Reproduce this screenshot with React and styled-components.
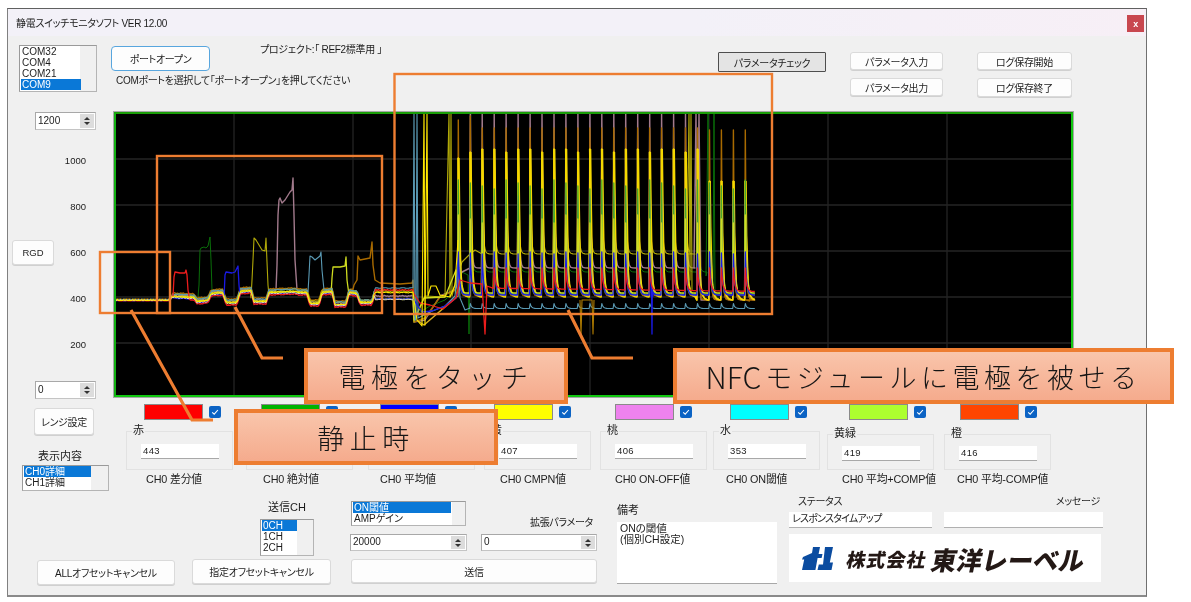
import React from 'react';
import styled, { createGlobalStyle } from 'styled-components';

const Global = createGlobalStyle`
  html, body { margin: 0; padding: 0; background: #fff; }
  * { box-sizing: border-box; }
`;

const FONT = '"Liberation Sans", "Noto Sans CJK JP", sans-serif';

const Stage = styled.div`
  position: relative;
  width: 1191px;
  height: 602px;
  overflow: hidden;
  padding: 8px 0 0 7px;
  font-family: ${FONT};
  font-size: 10px;
  letter-spacing: -0.3px;
  font-feature-settings: "palt";
  color: #1c1c1c;
  filter: blur(0.35px);
`;

const Window = styled.div`
  width: 1140px;
  height: 589px;
  background: #f0f0f0;
  border: 1px solid #808080;
  border-top-color: #606060;
  border-bottom: 2px solid #8a8a8a;
  border-right-color: #707070;
`;

const TitleBar = styled.div`
  height: 27px;
  display: flex;
  align-items: center;
  justify-content: space-between;
  padding: 0 2px 1px 8px;
  background: linear-gradient(90deg, #f3f1f8, #f3f1f8 60%, #f7eff6);
`;

const CloseButton = styled.div`
  width: 17px;
  height: 17px;
  margin-top: 3px;
  background: #c8474f;
  color: #fff;
  font-size: 9px;
  font-weight: 700;
  display: flex;
  align-items: center;
  justify-content: center;
`;

const TopRow = styled.div`
  height: 76px;
  display: flex;
  padding-left: 11px;
  padding-right: 74px;
`;

const ListBox = styled.div`
  width: ${p => p.$w}px;
  height: ${p => p.$h}px;
  background: linear-gradient(90deg, #fff ${p => p.$lane}px, #f0f0f0 ${p => p.$lane}px);
  border: 1px solid #9a9a9a;
  border-right-color: #b4b4b4;
  border-bottom-color: #b4b4b4;
  padding: 0 1px;
  margin-top: ${p => p.$mt || 0}px;
  margin-left: ${p => p.$ml || 0}px;
  flex: none;
`;

const ListItem = styled.div`
  height: 11px;
  line-height: 11px;
  width: ${p => p.$w}px;
  letter-spacing: 0;
  padding-left: 1px;
  white-space: nowrap;
  overflow: hidden;
  background: ${p => (p.$on ? '#0a78d7' : 'transparent')};
  color: ${p => (p.$on ? '#fff' : '#1c1c1c')};
`;

const PortColumn = styled.div`
  width: 149px;
  margin-left: 14px;
  margin-top: 10px;
  flex: none;
`;

const Button = styled.div`
  display: flex;
  align-items: center;
  justify-content: center;
  white-space: nowrap;
  flex: none;
  width: ${p => p.$w}px;
  height: ${p => p.$h}px;
  margin-left: ${p => p.$ml || 0}px;
  margin-top: ${p => p.$mt || 0}px;
  background: #fdfdfd;
  border: 1px solid #dadada;
  border-radius: 3px;
  box-shadow: 0 1px 0 #d0d0d0;
`;

const PortButton = styled(Button)`
  border: 1.5px solid #58a6de;
  box-shadow: none;
  border-radius: 4px;
`;

const PressedButton = styled(Button)`
  background: #e4e4e4;
  border: 1px solid #4e4e4e;
  border-radius: 1px;
  box-shadow: none;
`;

const Hint = styled.div`
  margin: 1px 0 0 5px;
  white-space: nowrap;
`;

const Project = styled.div`
  margin-top: 5px;
  white-space: nowrap;
`;

const TopButtons = styled.div`
  margin-left: auto;
  margin-top: 16px;
  display: flex;
`;

const ButtonStack = styled.div`
  display: flex;
  flex-direction: column;
  margin-left: ${p => p.$ml}px;
  gap: 8px;
`;

const ChartRow = styled.div`
  display: flex;
  height: 288px;
  margin-bottom: 5px;
  margin-top: -1px;
`;

const AxisColumn = styled.div`
  width: 105px;
  flex: none;
  display: flex;
  flex-direction: column;
  padding-top: 1px;
`;

const AxisScale = styled.div`
  margin-top: 7px;
`;

const AxisRow = styled.div`
  height: 46.2px;
  display: flex;
  align-items: center;
  justify-content: flex-end;
  padding-right: 27px;
  font-size: 9.5px;
  letter-spacing: 0;
`;

const RgdButton = styled(Button)`
  margin-right: auto;
  margin-left: 4px;
`;

const Spinner = styled.div`
  display: flex;
  flex: none;
  width: ${p => p.$w}px;
  height: ${p => p.$h || 18}px;
  margin-left: ${p => p.$ml || 0}px;
  margin-top: ${p => p.$mt || 0}px;
  background: #fff;
  border: 1px solid #a8a8a8;
  border-bottom-color: #c4c4c4;
  border-right-color: #c4c4c4;
`;

const SpinText = styled.div`
  flex: 1;
  padding-left: 2px;
  letter-spacing: 0;
  line-height: ${p => p.$lh || 15}px;
`;

const SpinArrows = styled.div`
  width: 14px;
  margin: 1px;
  background: #dcdcdc;
  display: flex;
  flex-direction: column;
  align-items: center;
  justify-content: center;
  gap: 2px;
`;

const ArrowUp = styled.i`
  width: 0;
  height: 0;
  border-left: 3px solid transparent;
  border-right: 3px solid transparent;
  border-bottom: 3px solid #333;
`;

const ArrowDown = styled.i`
  width: 0;
  height: 0;
  border-left: 3px solid transparent;
  border-right: 3px solid transparent;
  border-top: 3px solid #333;
`;

const ChartFrame = styled.div`
  width: 961px;
  height: 287px;
  flex: none;
  border: 1px solid #a8a8a8;
  background: #000;
`;

const ChartInner = styled.div`
  width: 959px;
  height: 285px;
  border: 2px solid #12b012;
  border-top-color: #1a9e08;
  border-right-color: #10c810;
  border-bottom-color: #10c810;
  overflow: hidden;
`;

const MidRow = styled.div`
  display: flex;
  height: 91px;
`;

const LeftColumn = styled.div`
  width: 118px;
  flex: none;
  padding-top: 4px;
`;

const CenterLabel = styled.div`
  width: ${p => p.$w}px;
  margin-left: ${p => p.$ml || 0}px;
  margin-top: ${p => p.$mt || 0}px;
  text-align: center;
  line-height: 12px;
  white-space: nowrap;
  font-size: 11px;
  letter-spacing: 0;
`;

const Channel = styled.div`
  width: ${p => p.$w}px;
  flex: none;
`;

const SwatchRow = styled.div`
  display: flex;
  align-items: center;
  height: 16px;
  padding-left: ${p => p.$left}px;
`;

const Swatch = styled.div`
  width: 59px;
  height: 16px;
  background: ${p => p.$color};
  border: 1px solid #8a8a8a;
`;

const Check = styled.div`
  width: 12px;
  height: 12px;
  margin-left: 6px;
  border-radius: 2px;
  background: #0b63c4;
  display: flex;
  align-items: center;
  justify-content: center;
`;

const Group = styled.div`
  position: relative;
  width: 107px;
  height: ${p => 470 - p.$top}px;
  margin-top: ${p => p.$top - 420}px;
  border: 1px solid #e2e2e2;
  padding: ${p => (p.$top > 431 ? 11 : 12)}px 0 0 14px;
`;

const Legend = styled.span`
  position: absolute;
  left: 5px;
  top: -8px;
  padding: 0 1px;
  background: #f0f0f0;
  line-height: 12px;
  font-size: 11px;
  letter-spacing: 0;
`;

const ValueBox = styled.div`
  width: 78px;
  height: 15px;
  background: #fff;
  border-bottom: 1px solid #a8a8a8;
  padding-left: 2px;
  line-height: 13px;
  font-size: 9.5px;
  letter-spacing: 0.4px;
`;

const Caption = styled.div`
  margin-top: 3px;
  padding-left: ${p => p.$left}px;
  white-space: nowrap;
  line-height: 13px;
  font-size: 10.8px;
  letter-spacing: -0.15px;
`;

const BottomRow = styled.div`
  display: flex;
  height: 95px;
`;

const OffsetArea = styled.div`
  width: 343px;
  flex: none;
  padding-top: 6px;
`;

const OffsetButtons = styled.div`
  display: flex;
  align-items: flex-start;
  margin-top: 3px;
`;

const ParamArea = styled.div`
  width: 266px;
  flex: none;
  padding-top: 6px;
`;

const ParamTop = styled.div`
  display: flex;
  align-items: flex-end;
  justify-content: space-between;
  width: 246px;
`;

const ParamLabel = styled.div`
  line-height: 12px;
  margin-bottom: -3px;
  margin-right: 4px;
  white-space: nowrap;
`;

const SpinnerRow = styled.div`
  display: flex;
  gap: 14px;
  margin-top: 8px;
  margin-left: -1px;
`;

const NoteArea = styled.div`
  width: 172px;
  flex: none;
  padding-top: 9px;
`;

const NoteLabel = styled.div`
  line-height: 12px;
  font-size: 11px;
  letter-spacing: 0;
  white-space: nowrap;
`;

const FieldLabel = styled.div`
  line-height: 12px;
  white-space: nowrap;
`;

const NoteBox = styled.div`
  width: 160px;
  height: 62px;
  margin-top: 6px;
  background: #fff;
  border-bottom: 1px solid #a8a8a8;
  padding: 1px 3px;
  line-height: 11px;
  font-size: 10.5px;
  letter-spacing: 0;
`;

const StatusArea = styled.div`
  width: 314px;
  flex: none;
`;

const StatusLabels = styled.div`
  display: flex;
  justify-content: space-between;
  height: 17px;
  padding: 1px 3px 0 9px;
`;

const StatusBoxes = styled.div`
  display: flex;
  justify-content: space-between;
`;

const StatusBox = styled.div`
  width: ${p => p.$w}px;
  height: 16px;
  background: #fff;
  border-bottom: 1px solid #b0b0b0;
  padding-left: 3px;
  line-height: 14px;
  letter-spacing: -0.8px;
  white-space: nowrap;
`;

const LogoBox = styled.div`
  width: 312px;
  height: 48px;
  margin-top: 6px;
  background: #fff;
  display: flex;
  align-items: center;
  padding-left: 13px;
`;

const LogoSmall = styled.span`
  margin-left: 14px;
  font-size: 19px;
  font-weight: 900;
  letter-spacing: 1px;
  font-feature-settings: normal;
  color: #231815;
  transform: skewX(-12deg);
  white-space: nowrap;
`;

const LogoLarge = styled.span`
  margin-left: 5px;
  font-size: 25.5px;
  font-weight: 900;
  letter-spacing: 0;
  font-feature-settings: normal;
  color: #231815;
  transform: skewX(-12deg);
  white-space: nowrap;
`;

const Annotations = styled.svg`
  position: absolute;
  left: 0;
  top: 0;
  width: 1191px;
  height: 602px;
  pointer-events: none;
`;

const Callout = styled.div`
  position: absolute;
  left: ${p => p.$x}px;
  top: ${p => p.$y}px;
  width: ${p => p.$w}px;
  height: 56px;
  display: flex;
  align-items: center;
  justify-content: center;
  background: linear-gradient(180deg, #f9c5ab, #f5ab8d);
  border: 4px solid #ed7d31;
  font-family: "Noto Sans CJK JP", sans-serif;
  font-feature-settings: normal;
  font-weight: 300;
  font-size: 27px;
  letter-spacing: ${p => p.$ls}px;
  color: #151515;
  white-space: nowrap;
`;

const Tight = styled.span`
  letter-spacing: 0;
  font-size: 30px;
  margin-right: 4px;
`;

/* ---------- chart data ---------- */

const BASE_STEPS = [
  [116, 300], [170, 300], [172, 296], [194, 297], [197, 301], [208, 300], [211, 293], [223, 292],
  [226, 302], [237, 302], [240, 291], [251, 290], [254, 301], [266, 301], [269, 292], [295, 291],
  [298, 292], [307, 292], [310, 303], [319, 303], [322, 292], [332, 291], [335, 304], [346, 304],
  [349, 292], [357, 293], [360, 302], [372, 302], [375, 290], [415, 290],
];

const interp = (steps, x) => {
  for (let i = 1; i < steps.length; i++) {
    if (x <= steps[i][0]) {
      const [x0, y0] = steps[i - 1];
      const [x1, y1] = steps[i];
      return y0 + ((y1 - y0) * (x - x0)) / (x1 - x0 || 1);
    }
  }
  return steps[steps.length - 1][1];
};

const wobble = (x, seed) => Math.sin(x * 2.1 + seed) * 0.35 + Math.sin(x * 0.7 + seed * 3) * 0.25;

function leftPart(off, lateOff, seed, bumps = []) {
  const pts = [];
  for (let x = 116; x <= 413; x += 1.5) {
    if (bumps.some(b => x >= b[0][0] && x <= b[b.length - 1][0])) continue;
    const o = x > 172 ? off : off * 0.2;
    const late = x > 375 ? lateOff : 0;
    pts.push([x, interp(BASE_STEPS, x) + o + late + wobble(x, seed)]);
  }
  bumps.forEach(b => pts.push(...b));
  return pts.sort((a, b) => a[0] - b[0]);
}

const SPIKE_X = Array.from({ length: 25 }, (_, i) => 458.3 + 11.96 * i);
const DECAY = [0.6, 1.2, 1.8, 2.6, 3.6, 5, 7, 9.5];

function spikes(base, peak, { from = 0, to = 24, tau = 1.25 } = {}) {
  const pts = [];
  for (let i = from; i <= to; i++) {
    const xs = SPIKE_X[i];
    const b = base(i);
    const p = peak(i);
    pts.push([xs - 0.7, b], [xs, p]);
    DECAY.forEach(t => pts.push([xs + t, b + (p - b) * Math.exp(-t / tau)]));
  }
  return pts;
}

const toPoints = pts => pts.map(p => `${p[0].toFixed(1)},${p[1].toFixed(1)}`).join(' ');

const yellowPeak = i => (i === 0 ? 158 : i >= 21 ? 181 : i % 3 === 1 ? 152 : 149);

const YELLOW_COLUMNS = SPIKE_X.map((xs, i) => {
  const p = yellowPeak(i);
  return `M${(xs + 0.2).toFixed(1)} ${p} L${(xs + 0.9).toFixed(1)} ${p + 55} L${(xs + 2.2).toFixed(1)} 280`;
}).join(' ');

const RED_BUMP = [[173, 296], [174, 277], [175, 272], [180, 273], [185, 273], [186, 270], [187, 275], [188, 290]];
const GREEN_BUMP = [[198, 297], [199, 285], [200, 250], [201, 248], [204, 247], [206, 248], [208, 246], [210, 237], [211, 260], [212, 290]];
const BLUE_BUMP = [[224, 298], [225, 275], [226, 272], [232, 273], [235, 272], [238, 266], [239, 285], [240, 296]];
const YELLOW_BUMP = [[251, 298], [252, 280], [253, 260], [254, 238], [256, 240], [262, 250], [265, 251], [266, 238], [267, 262], [268, 285], [269, 296]];
const PINK_BUMP = [[276, 290], [277, 265], [278, 215], [279, 200], [280, 198], [282, 203], [285, 200], [290, 192], [292, 190], [293, 178], [294, 215], [295, 260], [297, 290]];
const SKY_BUMP = [[308, 292], [309, 275], [310, 256], [312, 257], [315, 260], [320, 256], [321, 252], [322, 270], [324, 290]];
const LIME_BUMP = [[331, 295], [332, 278], [333, 267], [340, 267], [345, 266], [346, 257], [347, 280], [349, 295]];
const ORANGE_BUMP = [[354, 285], [357, 280], [358, 256], [360, 260], [370, 258], [372, 242], [373, 265], [375, 280], [380, 283], [400, 284], [412, 283]];

const LOWER_TRACES = [
  {
    color: '#0a6e0a', width: 1,
    pts: [
      ...leftPart(1, 1, 1, [GREEN_BUMP]),
      [414, 320], [420, 312], [430, 306], [445, 300], [455, 290], [462, 272], [468, 275],
      [469, 334], [470, 270],
      ...spikes(() => 272, i => (i % 2 ? 196 : 190), { from: 1, to: 20, tau: 1.1 }),
      [706, 276], [708, 112], [709, 280], [713, 285], [714, 112], [715, 295], [720, 300],
    ],
  },
  {
    color: '#a27a8c', width: 1.4,
    pts: [
      ...leftPart(-1, 7, 2, [PINK_BUMP]),
      [414, 322], [425, 320], [440, 296], [455, 290], [462, 272], [470, 268],
      ...spikes(() => 268, () => 112, { from: 1, to: 19, tau: 0.9 }),
      [694, 268], [696, 112], [697, 268], [699, 112], [701, 300],
      ...spikes(() => 300, () => 207, { from: 21, to: 24, tau: 1.2 }),
    ],
  },
  {
    color: '#a86a00', width: 1.4,
    pts: [
      ...leftPart(-3, -7, 3, [ORANGE_BUMP]),
      [414, 322], [425, 318], [440, 297], [455, 290],
      ...spikes(
        i => (i < 20 ? 296 : 300),
        i => (i === 0 ? 120 : i >= 21 ? 130 : i === 1 ? 116 : 128),
        { tau: 0.9 },
      ),
      [746, 300], [750, 301],
    ],
  },
  {
    color: '#b0a808', width: 1.1,
    pts: [
      ...leftPart(-2, 3, 4, [YELLOW_BUMP]),
      [414, 322], [425, 296], [445, 297], [449, 112], [450, 297], [451, 112], [452, 296], [456, 280], [462, 262], [470, 254], [475, 250], [482, 254],
      ...spikes(() => 254, () => 190, { from: 2, to: 19, tau: 1.1 }),
      [687, 254], [689, 112], [690, 280], [691, 112], [692, 290],
    ],
  },
  {
    color: '#d8ac20', width: 1.5,
    pts: [
      [418, 321], [424, 325],
      ...spikes(i => (i < 20 ? 296 : 300), () => 230, { tau: 1.9 }),
    ],
  },
  {
    color: '#f5d800', width: 1.5,
    pts: spikes(i => (i < 20 ? 297 : 300), yellowPeak, { tau: 1.5 }),
  },
];

const UPPER_TRACES = [
  {
    color: '#c09ab0', width: 1.2,
    pts: spikes(() => 295, i => (i === 0 ? 205 : i % 2 ? 196 : 200), { tau: 1.2 }),
  },
  {
    color: '#48a828', width: 1.3,
    pts: spikes(() => 294, i => 180 + (i % 4) * 3, { tau: 0.8 }),
  },
  {
    color: '#d0dc20', width: 1.3,
    pts: [
      ...leftPart(0, 9, 5, [LIME_BUMP]),
      [414, 320], [424, 298], [445, 297], [456, 270],
      ...spikes(() => 293, i => 215 + (i % 3) * 4, { tau: 1.2 }),
    ],
  },
  {
    color: '#5a9ab4', width: 1.1,
    pts: [
      ...leftPart(-2, 0, 6, [SKY_BUMP]),
      [414, 112], [415, 320], [416, 320], [417, 112], [418, 318], [430, 312], [445, 306], [455, 296], [458, 260], [460, 298], [465, 310],
      [470, 308],
      ...spikes(() => 308.5, () => 303.5, { from: 1, tau: 1.4 }),
    ],
  },
  {
    color: '#1a1ae6', width: 1.3,
    pts: [
      ...leftPart(2, 7, 7, [BLUE_BUMP]),
      [414, 300], [422, 312], [432, 311], [445, 306], [452, 301], [456, 298],
      ...spikes(() => 295, i => 252 + (i % 3), { tau: 1.3 }),
      [651, 296], [652, 334], [653, 296],
    ].sort((a, b) => a[0] - b[0]),
  },
  {
    color: '#ec1c1c', width: 1.3,
    pts: [
      ...leftPart(3, -3, 8, [RED_BUMP]),
      [414, 294], [420, 303], [430, 305], [443, 309], [450, 303], [456, 298], [460, 280], [470, 283], [482, 284], [485, 334], [487, 286],
      ...spikes(i => 288 + i * 0.14, () => 268, { from: 3, tau: 1.3 }),
    ],
  },
  {
    color: '#f2f2c0', width: 0.9,
    pts: leftPart(1.5, 8, 9),
  },
  {
    color: '#ffe800', width: 1.1,
    pts: [
      ...leftPart(0.5, 2, 10),
      [414, 300], [417, 320], [422, 326], [424, 112], [425, 325], [427, 112], [428, 296], [431, 286], [436, 286], [440, 295], [450, 297], [455, 285], [458, 240],
    ],
  },
  {
    color: '#b07c00', width: 1.1,
    pts: [[580, 300], [581, 335], [582, 300], [592, 300], [593, 334], [594, 300]],
  },
];

const V_GRID = [234, 353, 471, 590, 709, 828, 947];
const H_GRID = [159, 205, 251, 297, 343];

const Trace = ({ t }) => (
  <polyline points={toPoints(t.pts)} fill="none" stroke={t.color} strokeWidth={t.width} strokeLinejoin="round" />
);

const ChartDrawing = () => (
  <svg width="955" height="281" viewBox="116 114 955 281" style={{ display: 'block' }}>
    {V_GRID.map(x => <line key={x} x1={x} x2={x} y1="114" y2="395" stroke="#242424" strokeWidth="1.3" />)}
    {H_GRID.map(y => <line key={y} x1="116" x2="1071" y1={y} y2={y} stroke="#242424" strokeWidth="1.3" />)}
    {LOWER_TRACES.map(t => <Trace key={t.color} t={t} />)}
    <path d={YELLOW_COLUMNS} fill="none" stroke="#f5d800" strokeWidth="2.4" />
    {UPPER_TRACES.map(t => <Trace key={t.color} t={t} />)}
  </svg>
);

const CHANNELS = [
  { legend: '赤', value: '443', caption: 'CH0 差分値', color: '#ff0000', w: 120, sw: 18, cap: 20, top: 431 },
  { legend: '', value: '', caption: 'CH0 絶対値', color: '#00b400', w: 122, sw: 15, cap: 17, top: 431 },
  { legend: '', value: '', caption: 'CH0 平均値', color: '#0000ff', w: 116, sw: 12, cap: 12, top: 431 },
  { legend: '黄', value: '407', caption: 'CH0 CMPN値', color: '#ffff00', w: 116, sw: 10, cap: 16, top: 431 },
  { legend: '桃', value: '406', caption: 'CH0 ON-OFF値', color: '#ee82ee', w: 113, sw: 15, cap: 15, top: 431 },
  { legend: '水', value: '353', caption: 'CH0 ON閾値', color: '#00ffff', w: 114, sw: 17, cap: 13, top: 431 },
  { legend: '黄緑', value: '419', caption: 'CH0 平均+COMP値', color: '#adff2f', w: 117, sw: 22, cap: 15, top: 434 },
  { legend: '橙', value: '416', caption: 'CH0 平均-COMP値', color: '#ff4500', w: 120, sw: 16, cap: 13, top: 434 },
];

const SpinField = ({ value, w, h, ml, mt, lh }) => (
  <Spinner $w={w} $h={h} $ml={ml} $mt={mt}>
    <SpinText $lh={lh}>{value}</SpinText>
    <SpinArrows><ArrowUp /><ArrowDown /></SpinArrows>
  </Spinner>
);

const CheckMark = () => (
  <svg width="8" height="8" viewBox="0 0 8 8" fill="none" stroke="#fff" strokeWidth="1.1">
    <path d="M1.2 4.3 L3.2 6.1 L6.9 2" />
  </svg>
);

export default function App() {
  return (
    <Stage>
      <Global />
      <Window>
        <TitleBar>
          <span>静電スイッチモニタソフト VER 12.00</span>
          <CloseButton>x</CloseButton>
        </TitleBar>

        <TopRow>
          <ListBox $w={78} $h={47} $lane={60} $mt={9}>
            <ListItem $w={60}>COM32</ListItem>
            <ListItem $w={60}>COM4</ListItem>
            <ListItem $w={60}>COM21</ListItem>
            <ListItem $w={60} $on>COM9</ListItem>
          </ListBox>
          <PortColumn>
            <PortButton $w={99} $h={25}>ポートオープン</PortButton>
            <Hint>COMポートを選択して「ポートオープン」を押してください</Hint>
          </PortColumn>
          <Project>プロジェクト:「 REF2標準用 」</Project>
          <TopButtons>
            <PressedButton $w={108} $h={20}>パラメータチェック</PressedButton>
            <ButtonStack $ml={24}>
              <Button $w={93} $h={18}>パラメータ入力</Button>
              <Button $w={93} $h={18}>パラメータ出力</Button>
            </ButtonStack>
            <ButtonStack $ml={34}>
              <Button $w={95} $h={18}>ログ保存開始</Button>
              <Button $w={95} $h={19}>ログ保存終了</Button>
            </ButtonStack>
          </TopButtons>
        </TopRow>

        <ChartRow>
          <AxisColumn>
            <SpinField value="1200" w={61} ml={27} />
            <AxisScale>
              <AxisRow>1000</AxisRow>
              <AxisRow>800</AxisRow>
              <AxisRow>
                <RgdButton $w={42} $h={25}>RGD</RgdButton>
                600
              </AxisRow>
              <AxisRow>400</AxisRow>
              <AxisRow>200</AxisRow>
            </AxisScale>
            <SpinField value="0" w={61} ml={27} mt={13} />
          </AxisColumn>
          <ChartFrame>
            <ChartInner>
              <ChartDrawing />
            </ChartInner>
          </ChartFrame>
        </ChartRow>

        <MidRow>
          <LeftColumn>
            <Button $w={60} $h={27} $ml={26}>レンジ設定</Button>
            <CenterLabel $w={76} $ml={14} $mt={15}>表示内容</CenterLabel>
            <ListBox $w={87} $h={26} $lane={68} $mt={3} $ml={14}>
              <ListItem $w={67} $on>CH0詳細</ListItem>
              <ListItem $w={67}>CH1詳細</ListItem>
            </ListBox>
          </LeftColumn>
          {CHANNELS.map(c => (
            <Channel key={c.caption} $w={c.w}>
              <SwatchRow $left={c.sw}>
                <Swatch $color={c.color} />
                <Check><CheckMark /></Check>
              </SwatchRow>
              <Group $top={c.top}>
                <Legend>{c.legend}</Legend>
                <ValueBox>{c.value}</ValueBox>
              </Group>
              <Caption $left={c.cap}>{c.caption}</Caption>
            </Channel>
          ))}
        </MidRow>

        <BottomRow>
          <OffsetArea>
            <CenterLabel $w={54} $ml={252}>送信CH</CenterLabel>
            <ListBox $w={54} $h={37} $lane={36} $mt={6} $ml={252}>
              <ListItem $w={35} $on>0CH</ListItem>
              <ListItem $w={35}>1CH</ListItem>
              <ListItem $w={35}>2CH</ListItem>
            </ListBox>
            <OffsetButtons>
              <Button $w={138} $h={25} $ml={29} $mt={1}>ALLオフセットキャンセル</Button>
              <Button $w={139} $h={25} $ml={17}>指定オフセットキャンセル</Button>
            </OffsetButtons>
          </OffsetArea>
          <ParamArea>
            <ParamTop>
              <ListBox $w={115} $h={25} $lane={100}>
                <ListItem $w={98} $on>ON閾値</ListItem>
                <ListItem $w={98}>AMPゲイン</ListItem>
              </ListBox>
              <ParamLabel>拡張パラメータ</ParamLabel>
            </ParamTop>
            <SpinnerRow>
              <SpinField value="20000" w={117} h={17} lh={14} />
              <SpinField value="0" w={116} h={17} lh={14} />
            </SpinnerRow>
            <Button $w={246} $h={24} $mt={8}>送信</Button>
          </ParamArea>
          <NoteArea>
            <NoteLabel>備考</NoteLabel>
            <NoteBox>ONの閾値<br />(個別CH設定)</NoteBox>
          </NoteArea>
          <StatusArea>
            <StatusLabels>
              <FieldLabel>ステータス</FieldLabel>
              <FieldLabel>メッセージ</FieldLabel>
            </StatusLabels>
            <StatusBoxes>
              <StatusBox $w={143}>レスポンスタイムアップ</StatusBox>
              <StatusBox $w={159} />
            </StatusBoxes>
            <LogoBox>
              <svg width="31" height="23" viewBox="0 0 31 23">
                <path fill="#0b4ca0" d="M11 0 H18 L16.6 7 H20.5 L19.6 11 H15.6 L13.4 23 H0 L2.2 12.5 H0 L1 10 L10 6 Z" />
                <path fill="#0b4ca0" d="M23 0 H31 L27.8 15.5 H31 L29.5 23 H15.5 L16.8 17.5 H21 Z" />
              </svg>
              <LogoSmall>株式会社</LogoSmall>
              <LogoLarge>東洋レーベル</LogoLarge>
            </LogoBox>
          </StatusArea>
        </BottomRow>
      </Window>

      <Annotations viewBox="0 0 1191 602">
        <g fill="none" stroke="#ed7d31" strokeWidth="2.4">
          <rect x="100" y="252" width="70" height="61" />
          <rect x="157" y="156" width="225" height="157" />
          <rect x="394.5" y="74" width="377.5" height="240" />
        </g>
        <g fill="none" stroke="#ed7d31" strokeWidth="3.2">
          <polyline points="131,310 192,420 213,420" />
          <polyline points="235,307 262,358 283,358" />
          <polyline points="568,310 592,358 633,358" />
        </g>
      </Annotations>

      <Callout $x={304} $y={348} $w={264} $ls={5.5}>電極をタッチ</Callout>
      <Callout $x={234} $y={409} $w={264} $ls={5.5}>静止時</Callout>
      <Callout $x={673} $y={348} $w={501} $ls={4.5}><Tight>NFC</Tight>モジュールに電極を被せる</Callout>
    </Stage>
  );
}
